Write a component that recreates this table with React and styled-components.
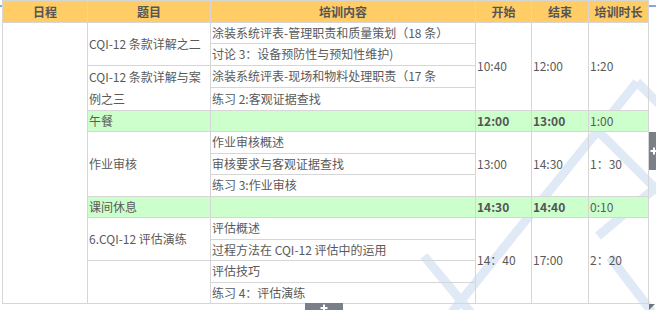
import React from "react";
import styled, { createGlobalStyle } from "styled-components";

const GlobalStyle = createGlobalStyle`
  html, body { margin: 0; padding: 0; background: #ffffff; }
  body { font-family: "Noto Sans CJK SC", "Noto Sans", sans-serif; }
`;

const Page = styled.div`
  position: relative;
  width: 656px;
  height: 310px;
  overflow: hidden;
  padding-left: 2px;
  box-sizing: border-box;
  background: #ffffff;
`;

const Watermark = styled.svg`
  position: absolute;
  left: 0;
  top: 0;
  width: 656px;
  height: 310px;
  z-index: 0;
  pointer-events: none;
`;

const Table = styled.table`
  position: relative;
  z-index: 1;
  border-collapse: collapse;
  table-layout: fixed;
  width: 646px;
  font-family: "Noto Sans CJK SC", "Noto Sans", sans-serif;
  font-size: 12px;
  color: #5a5a5a;
`;

const HeadCell = styled.th`
  background: #ffcc66;
  border: 1px solid #d6d6d6;
  height: 21px;
  padding: 0;
  line-height: 21px;
  font-weight: bold;
  color: #555555;
  text-align: center;
  white-space: nowrap;
`;

const Cell = styled.td`
  border: 1px solid #d6d6d6;
  padding: 0 0 0 1px;
  height: 20.46px;
  line-height: 20.46px;
  vertical-align: middle;
  text-align: left;
  background: ${(p) => (p.$green ? "#ccffcc" : "transparent")};
  font-weight: ${(p) => (p.$bold ? "bold" : "normal")};
  color: ${(p) => (p.$bold ? "#555555" : "#5a5a5a")};
  white-space: ${(p) => (p.$wrap ? "normal" : "nowrap")};
  overflow: hidden;
  word-break: break-all;
`;

const TwoLine = styled.span`
  display: block;
  line-height: 22px;
`;

const SideHandle = styled.div`
  position: absolute;
  left: 649px;
  top: 132px;
  width: 10px;
  height: 38px;
  background: #7b8088;
  z-index: 2;
  display: flex;
  align-items: center;
  justify-content: center;
`;

const BottomHandle = styled.div`
  position: absolute;
  left: 305px;
  top: 303px;
  width: 38px;
  height: 10px;
  background: #7b8088;
  z-index: 2;
  display: flex;
  justify-content: center;
  align-items: center;
`;

const Corner = styled.div`
  position: absolute;
  left: 649px;
  top: 304px;
  width: 0;
  height: 0;
  border-top: 6px solid #6f747a;
  border-right: 6px solid transparent;
  z-index: 2;
`;

const Tick = styled.div`
  position: absolute;
  top: 5px;
  ${(p) => (p.$right ? "left: 649px;" : "left: 0;")}
  width: ${(p) => (p.$right ? "7px" : "2px")};
  height: 2px;
  background: #8aa6d2;
  z-index: 2;
`;

const Plus = () => (
  <svg width="8" height="8" viewBox="0 0 8 8">
    <path d="M4 0.5 V7.5 M0.5 4 H7.5" stroke="#ffffff" strokeWidth="2" />
  </svg>
);

const strokes = [
  "M637 82 L452 312",
  "M637 82 L662 107",
  "M597 130 L662 195",
  "M424 256 L472 314",
  "M598 236 L660 184",
  "M610 257 L652 312",
];

export default function App() {
  return (
    <>
      <GlobalStyle />
      <Page>
        <Watermark viewBox="0 0 656 310">
          {strokes.map((d, i) => (
            <path key={i} d={d} stroke="#e0eaf6" strokeWidth="9" fill="none" />
          ))}
        </Watermark>
        <Tick />
        <Tick $right />
        <Table>
          <colgroup>
            <col style={{ width: 85 }} />
            <col style={{ width: 123 }} />
            <col style={{ width: 265 }} />
            <col style={{ width: 56 }} />
            <col style={{ width: 57 }} />
            <col style={{ width: 60 }} />
          </colgroup>
          <thead>
            <tr>
              <HeadCell>日程</HeadCell>
              <HeadCell>题目</HeadCell>
              <HeadCell>培训内容</HeadCell>
              <HeadCell>开始</HeadCell>
              <HeadCell>结束</HeadCell>
              <HeadCell>培训时长</HeadCell>
            </tr>
          </thead>
          <tbody>
            <tr>
              <Cell rowSpan={13} />
              <Cell rowSpan={2}>CQI-12 条款详解之二</Cell>
              <Cell>涂装系统评表-管理职责和质量策划（18 条）</Cell>
              <Cell rowSpan={4}>10:40</Cell>
              <Cell rowSpan={4}>12:00</Cell>
              <Cell rowSpan={4}>1:20</Cell>
            </tr>
            <tr>
              <Cell>讨论 3：设备预防性与预知性维护)</Cell>
            </tr>
            <tr>
              <Cell rowSpan={2} $wrap>
                <TwoLine>CQI-12 条款详解与案例之三</TwoLine>
              </Cell>
              <Cell>涂装系统评表-现场和物料处理职责（17 条</Cell>
            </tr>
            <tr>
              <Cell>练习 2:客观证据查找</Cell>
            </tr>
            <tr>
              <Cell $green>午餐</Cell>
              <Cell $green />
              <Cell $green $bold>12:00</Cell>
              <Cell $green $bold>13:00</Cell>
              <Cell $green>1:00</Cell>
            </tr>
            <tr>
              <Cell rowSpan={3}>作业审核</Cell>
              <Cell>作业审核概述</Cell>
              <Cell rowSpan={3}>13:00</Cell>
              <Cell rowSpan={3}>14:30</Cell>
              <Cell rowSpan={3}>1：30</Cell>
            </tr>
            <tr>
              <Cell>审核要求与客观证据查找</Cell>
            </tr>
            <tr>
              <Cell>练习 3:作业审核</Cell>
            </tr>
            <tr>
              <Cell $green>课间休息</Cell>
              <Cell $green />
              <Cell $green $bold>14:30</Cell>
              <Cell $green $bold>14:40</Cell>
              <Cell $green>0:10</Cell>
            </tr>
            <tr>
              <Cell rowSpan={2}>6.CQI-12 评估演练</Cell>
              <Cell>评估概述</Cell>
              <Cell rowSpan={4}>14：40</Cell>
              <Cell rowSpan={4}>17:00</Cell>
              <Cell rowSpan={4}>2：20</Cell>
            </tr>
            <tr>
              <Cell>过程方法在 CQI-12 评估中的运用</Cell>
            </tr>
            <tr>
              <Cell rowSpan={2} />
              <Cell>评估技巧</Cell>
            </tr>
            <tr>
              <Cell>练习 4：评估演练</Cell>
            </tr>
          </tbody>
        </Table>
        <SideHandle>
          <Plus />
        </SideHandle>
        <BottomHandle>
          <Plus />
        </BottomHandle>
        <Corner />
      </Page>
    </>
  );
}
